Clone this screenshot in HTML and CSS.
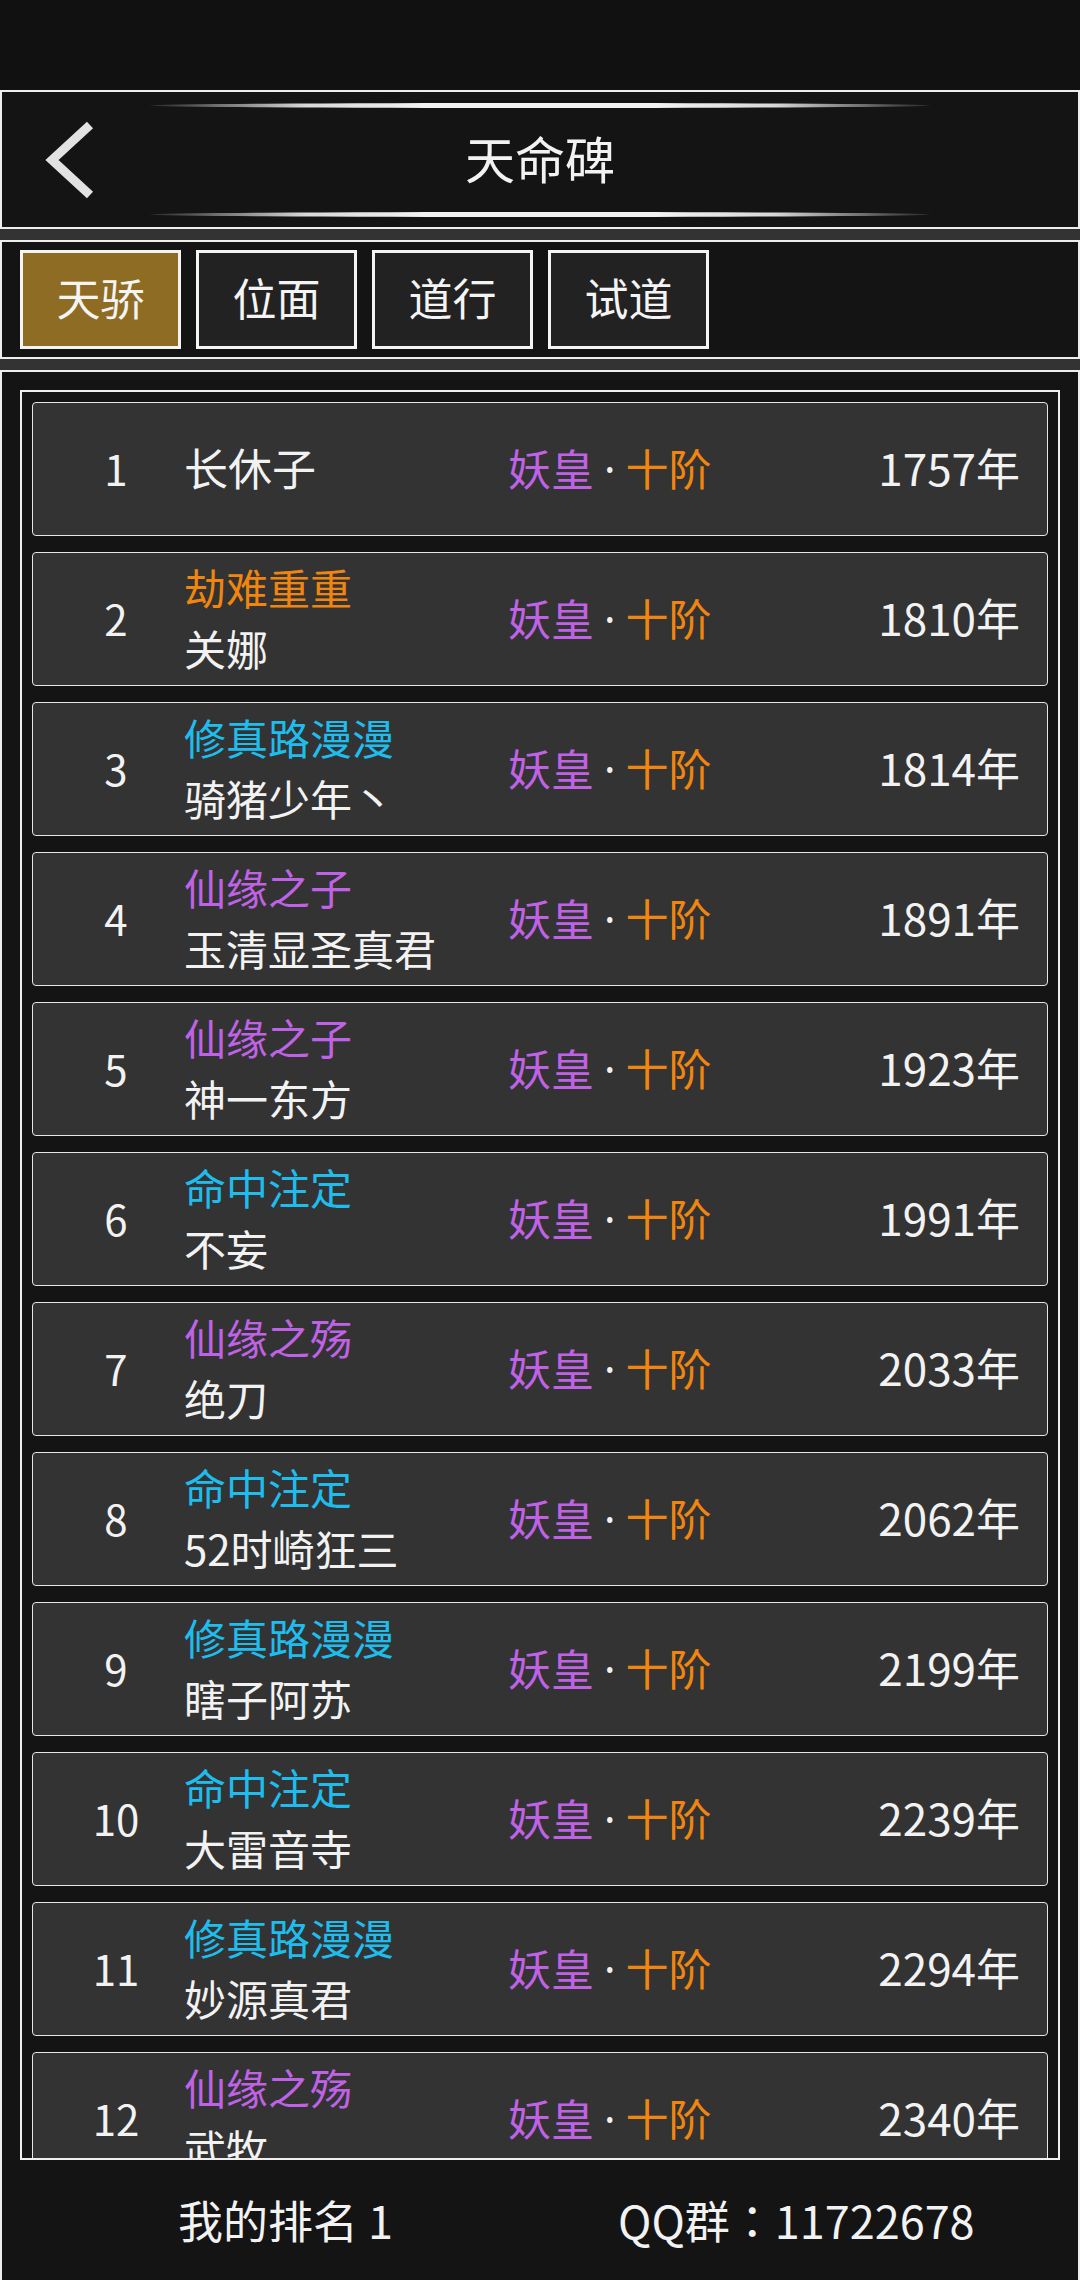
FILE: index.html
```html
<!DOCTYPE html>
<html lang="zh">
<head>
<meta charset="utf-8">
<title>天命碑</title>
<link rel="stylesheet" href="styles.css">
</head>
<body>
<div class="statusbar"></div>
<header class="header">
  <div class="back">
    <svg width="60" height="90" viewBox="0 0 60 90"><polyline points="50,10 12,45 50,80" fill="none" stroke="#e2e2e2" stroke-width="9" stroke-linejoin="miter" stroke-miterlimit="10"/></svg>
  </div>
  <div class="title-col">
    <div class="deco"></div>
    <div class="title">天命碑</div>
    <div class="deco"></div>
  </div>
  <div></div>
</header>
<nav class="tabs">
  <div class="tab active">天骄</div>
  <div class="tab">位面</div>
  <div class="tab">道行</div>
  <div class="tab">试道</div>
</nav>
<main class="panel">
  <div class="frame">
    <div class="list">
      <div class="card"><div class="rank">1</div><div class="who"><div class="name solo">长休子</div></div><div class="realm"><span class="pu">妖皇</span><span class="dot">·</span><span class="or">十阶</span></div><div class="year">1757年</div></div>
      <div class="card"><div class="rank">2</div><div class="who"><div class="tt or">劫难重重</div><div class="name">关娜</div></div><div class="realm"><span class="pu">妖皇</span><span class="dot">·</span><span class="or">十阶</span></div><div class="year">1810年</div></div>
      <div class="card"><div class="rank">3</div><div class="who"><div class="tt cy">修真路漫漫</div><div class="name">骑猪少年丶</div></div><div class="realm"><span class="pu">妖皇</span><span class="dot">·</span><span class="or">十阶</span></div><div class="year">1814年</div></div>
      <div class="card"><div class="rank">4</div><div class="who"><div class="tt pu">仙缘之子</div><div class="name">玉清显圣真君</div></div><div class="realm"><span class="pu">妖皇</span><span class="dot">·</span><span class="or">十阶</span></div><div class="year">1891年</div></div>
      <div class="card"><div class="rank">5</div><div class="who"><div class="tt pu">仙缘之子</div><div class="name">神一东方</div></div><div class="realm"><span class="pu">妖皇</span><span class="dot">·</span><span class="or">十阶</span></div><div class="year">1923年</div></div>
      <div class="card"><div class="rank">6</div><div class="who"><div class="tt cy">命中注定</div><div class="name">不妄</div></div><div class="realm"><span class="pu">妖皇</span><span class="dot">·</span><span class="or">十阶</span></div><div class="year">1991年</div></div>
      <div class="card"><div class="rank">7</div><div class="who"><div class="tt pu">仙缘之殇</div><div class="name">绝刀</div></div><div class="realm"><span class="pu">妖皇</span><span class="dot">·</span><span class="or">十阶</span></div><div class="year">2033年</div></div>
      <div class="card"><div class="rank">8</div><div class="who"><div class="tt cy">命中注定</div><div class="name">52时崎狂三</div></div><div class="realm"><span class="pu">妖皇</span><span class="dot">·</span><span class="or">十阶</span></div><div class="year">2062年</div></div>
      <div class="card"><div class="rank">9</div><div class="who"><div class="tt cy">修真路漫漫</div><div class="name">瞎子阿苏</div></div><div class="realm"><span class="pu">妖皇</span><span class="dot">·</span><span class="or">十阶</span></div><div class="year">2199年</div></div>
      <div class="card"><div class="rank">10</div><div class="who"><div class="tt cy">命中注定</div><div class="name">大雷音寺</div></div><div class="realm"><span class="pu">妖皇</span><span class="dot">·</span><span class="or">十阶</span></div><div class="year">2239年</div></div>
      <div class="card"><div class="rank">11</div><div class="who"><div class="tt cy">修真路漫漫</div><div class="name">妙源真君</div></div><div class="realm"><span class="pu">妖皇</span><span class="dot">·</span><span class="or">十阶</span></div><div class="year">2294年</div></div>
      <div class="card"><div class="rank">12</div><div class="who"><div class="tt pu">仙缘之殇</div><div class="name">武牧</div></div><div class="realm"><span class="pu">妖皇</span><span class="dot">·</span><span class="or">十阶</span></div><div class="year">2340年</div></div>
    </div>
  </div>
  <footer class="footer">
    <span>我的排名 1</span>
    <span>QQ群<span class="colon" lang="ja">：</span>11722678</span>
  </footer>
</main>
</body>
</html>
```

FILE: styles.css
```css
* { box-sizing: border-box; }
html, body {
  margin: 0;
  padding: 0;
}
body {
  width: 1080px;
  height: 2280px;
  overflow: hidden;
  background: #333333;
  font-family: "Noto Sans CJK SC", "Noto Sans", sans-serif;
  color: #f0f0f0;
}
.statusbar {
  height: 90px;
  background: #111111;
}
.header {
  height: 139px;
  border: 2px solid #eeeeee;
  background: #141414;
  display: grid;
  grid-template-columns: 148px 1fr 148px;
}
.back {
  display: flex;
  align-items: center;
  padding-left: 38px;
}
.back svg { display: block; }
.title-col {
  display: flex;
  flex-direction: column;
  justify-content: space-between;
  align-items: stretch;
  padding: 11px 0 10px;
}
.deco {
  height: 5px;
  border-radius: 50%;
  background: linear-gradient(90deg, #2a2a2a 0%, #6a6a6a 8%, #d8d8d8 20%, #f2f2f2 35%, #f2f2f2 65%, #d8d8d8 80%, #6a6a6a 92%, #2a2a2a 100%);
}
.title {
  text-align: center;
  font-size: 50px;
  line-height: 60px;
  padding-bottom: 6px;
  color: #f2f2f2;
}
.tabs {
  margin-top: 11px;
  height: 119px;
  border: 2px solid #eeeeee;
  background: #141414;
  display: flex;
  gap: 15px;
  padding: 8px 18px;
}
.tab {
  width: 161px;
  height: 99px;
  border: 3px solid #f4f4f4;
  background: #222222;
  display: flex;
  align-items: center;
  justify-content: center;
  padding-bottom: 5px;
  font-size: 44px;
  color: #f4f4f4;
}
.tab.active {
  background: #8e6c23;
}
.panel {
  margin-top: 11px;
  height: 1910px;
  border: 2px solid #eeeeee;
  border-bottom: none;
  background: #141414;
  padding: 18px 18px 0;
  display: flex;
  flex-direction: column;
}
.frame {
  height: 1770px;
  border: 2px solid #eeeeee;
  overflow: hidden;
  padding: 10px 10px 0;
}
.list {
  display: flex;
  flex-direction: column;
  gap: 16px;
}
.card {
  flex: none;
  height: 134px;
  border: 1px solid #e6e6e6;
  border-radius: 4px;
  background: #333333;
  display: flex;
  align-items: center;
  padding: 0 27px 4px 15px;
  font-size: 42px;
}
.rank {
  width: 136px;
  text-align: center;
  color: #f2f2f2;
  font-size: 42px;
}
.who {
  width: 324px;
  display: flex;
  flex-direction: column;
  line-height: 61px;
}
.name { color: #f2f2f2; white-space: nowrap; }
.name.solo { font-size: 44px; }
.tt { white-space: nowrap; }
.realm {
  white-space: nowrap;
  font-size: 43px;
}
.dot {
  font-family: "Noto Sans", sans-serif;
  color: #f2f2f2;
  margin: 0 10px;
}
.pu { color: #c062e6; }
.or { color: #f0860f; }
.cy { color: #1ebdee; }
.year {
  margin-left: auto;
  color: #f2f2f2;
  font-size: 44px;
}
.footer {
  flex: none;
  height: 120px;
  display: grid;
  grid-template-columns: 440px auto;
  align-items: center;
  padding-left: 158px;
  padding-bottom: 2px;
  font-size: 45px;
  color: #f2f2f2;
}
.colon {
  font-family: "Noto Sans CJK JP", "Noto Sans CJK SC", sans-serif;
}
```
